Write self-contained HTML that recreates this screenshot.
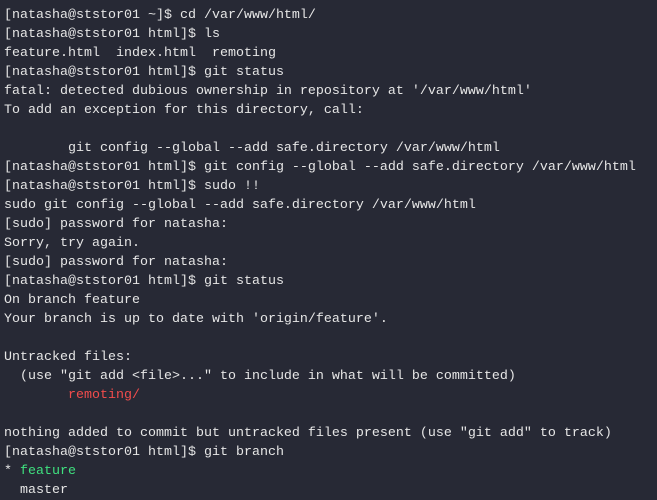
<!DOCTYPE html><html><head><style>
body{margin:0;background:#272935;width:657px;height:499px;overflow:hidden}
pre{margin:0;padding:6px 0 0 4px;font-family:"Liberation Mono",monospace;font-size:13.33px;line-height:19px;color:#e6e6e6}
.r{color:#f14c4c}.g{color:#3fe07f}
</style></head><body><pre>[natasha@ststor01 ~]$ cd /var/www/html/
[natasha@ststor01 html]$ ls
feature.html  index.html  remoting
[natasha@ststor01 html]$ git status
fatal: detected dubious ownership in repository at '/var/www/html'
To add an exception for this directory, call:

        git config --global --add safe.directory /var/www/html
[natasha@ststor01 html]$ git config --global --add safe.directory /var/www/html
[natasha@ststor01 html]$ sudo !!
sudo git config --global --add safe.directory /var/www/html
[sudo] password for natasha:
Sorry, try again.
[sudo] password for natasha:
[natasha@ststor01 html]$ git status
On branch feature
Your branch is up to date with 'origin/feature'.

Untracked files:
  (use "git add &lt;file&gt;..." to include in what will be committed)
        <span class="r">remoting/</span>

nothing added to commit but untracked files present (use "git add" to track)
[natasha@ststor01 html]$ git branch
* <span class="g">feature</span>
  master</pre></body></html>
